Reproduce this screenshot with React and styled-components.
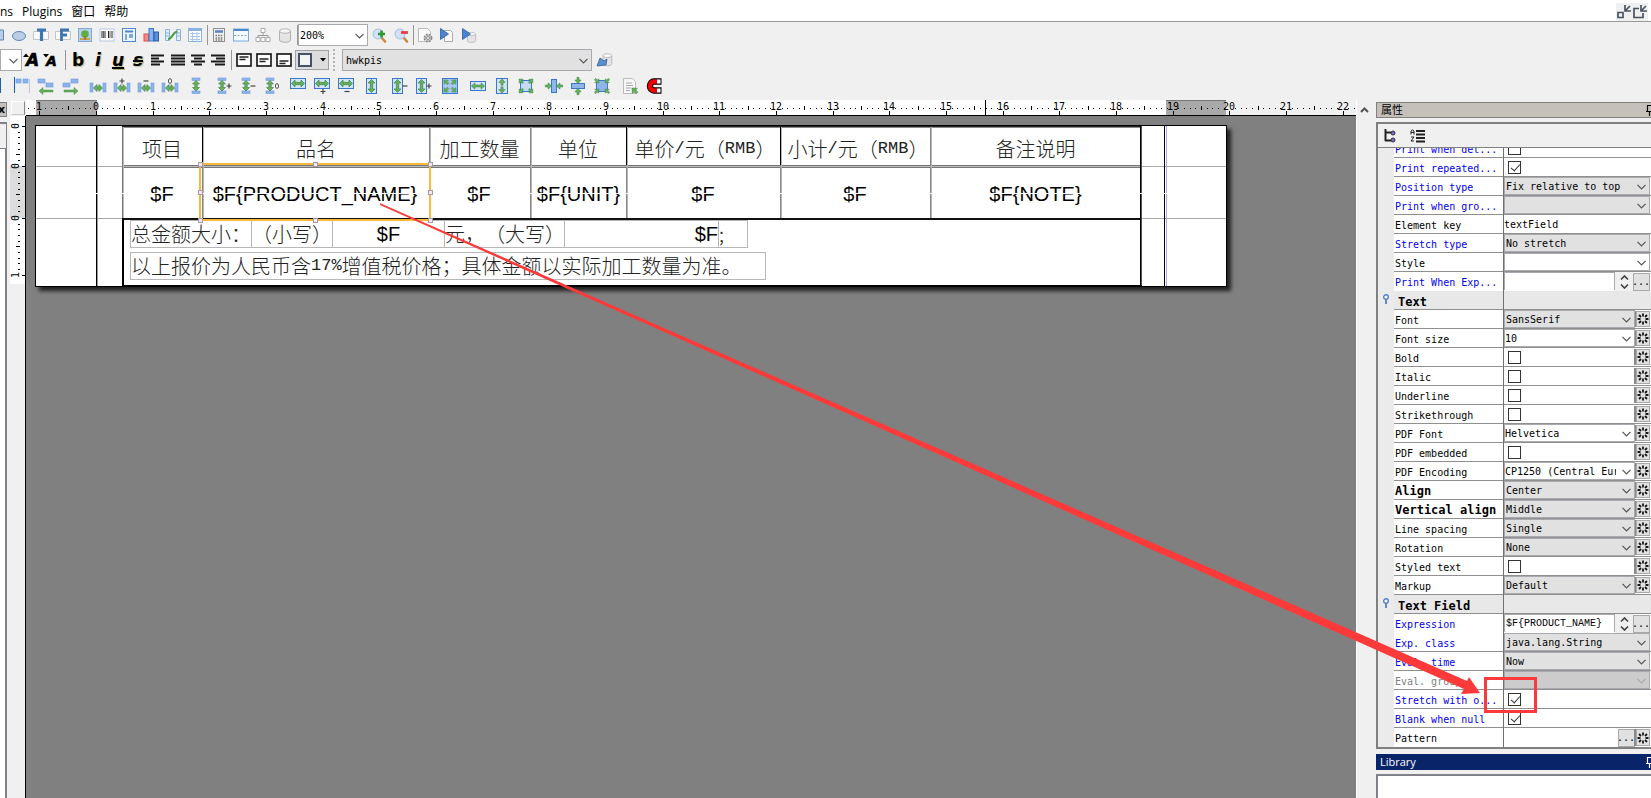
import React from "react";
import styled, { createGlobalStyle } from "styled-components";

const MONO = '"DejaVu Sans Mono", "Liberation Mono", monospace';
const UI = '"Open Sans", "Noto Sans CJK SC", sans-serif';
const CJK = '"Noto Sans CJK SC", sans-serif';
const RED = "#fd3a3a";

const GlobalStyle = createGlobalStyle`
  * { box-sizing: border-box; }
  body { margin: 0; background: #f0f0f0; font-family: ${UI}; font-size: 12px; color: #000; }
  button, input, select { font: inherit; color: inherit; margin: 0; padding: 0; border-radius: 0; }
`;

/* ---------- shell ---------- */
const Shell = styled.div`
  position: relative;
  display: flex;
  flex-direction: column;
  height: 100vh;
  overflow: hidden;
`;
const MenuBar = styled.nav`
  display: flex;
  align-items: center;
  flex: none;
  height: 22px;
  background: #fff;
  border-bottom: 1px solid #999;
  padding-right: 3px;
`;
const MenuItem = styled.button`
  border: 0;
  background: none;
  margin-right: 9px;
  padding-top: 2px;
  line-height: 20px;
`;
const WindowButtons = styled.div`
  display: flex;
  margin-left: auto;
  margin-top: 3px;
  background: #f0f0f0;
`;
const Toolbar = styled.div`
  display: flex;
  align-items: center;
  flex: none;
  height: ${(p) => p.$h}px;
`;
const Group = styled.div`
  display: flex;
  align-items: center;
  margin-right: ${(p) => p.$gap || 0}px;
`;
const Tool = styled.button`
  display: grid;
  place-items: center;
  width: ${(p) => p.$w}px;
  height: 18px;
  border: 0;
  background: none;
  svg { display: block; overflow: visible; }
`;
const Sep = styled.span`
  width: ${(p) => p.$w || 2}px;
  height: 20px;
  display: flex;
  justify-content: center;
  &::before { content: ""; width: 1px; background: #969696; }
`;
const Grip = styled.span`
  width: 2px;
  height: 22px;
  margin: 0 7px 0 4px;
  background: repeating-linear-gradient(#b4b4b4 0 2px, transparent 2px 4px);
`;
const ComboBox = styled.span`
  position: relative;
  display: block;
  flex: ${(p) => (p.$w ? "none" : "1")};
  width: ${(p) => (p.$w ? p.$w + "px" : "auto")};
  min-width: 0;
  height: ${(p) => p.$h}px;
  select {
    appearance: none;
    display: block;
    width: 100%;
    height: 100%;
    padding: 1px 18px 0 ${(p) => p.$pad}px;
    border: 1px solid #a9a9b0;
    background: ${(p) => p.$bg};
    font-family: ${MONO};
    font-size: 10px;
    opacity: 1;
    color: #000;
    overflow: hidden;
  }
  svg { position: absolute; right: 4px; top: 50%; margin-top: -2px; pointer-events: none; }
`;
const Combo = ({ w, h, bg = "#fff", value, id, label, pad = 1, disabled }) => (
  <ComboBox $w={w} $h={h} $bg={bg} $pad={pad}>
    <select id={id} aria-label={label} disabled={disabled}><option>{value}</option></select>
    <svg width="9" height="6" viewBox="0 0 9 6"><path d="M.5 .8 4.5 4.8 8.5 .8" fill="none" stroke={disabled ? "#aaa" : "#555"} strokeWidth="1.2" /></svg>
  </ComboBox>
);
const BorderPicker = styled.button`
  display: flex;
  align-items: center;
  justify-content: space-between;
  width: 34px;
  height: 20px;
  margin-left: 1px;
  padding: 0 2px;
  border: 1px solid #a0a0a0;
  background: #ddd;
`;

/* ---------- icons ---------- */
const G = "#66b15c";
const GD = "#2f7a35";
const B = "#8db4ea";
const BD = "#3a78cf";

const HArrow = ({ x1, x2, y }) => (
  <path d={`M${x1} ${y}l3.500-3.500v2.300H${x2 - 3.5}v-2.300l3.500 3.500-3.500 3.500v-2.300H${x1 + 3.5}v2.300z`} fill={G} stroke={GD} strokeWidth=".6" />
);
const VArrow = ({ y1, y2, x }) => (
  <path d={`M${x} ${y1}l3.500 3.500h-2.300V${y2 - 3.5}h2.300l-3.500 3.500-3.500-3.500h2.300V${y1 + 3.5}h-2.300z`} fill={G} stroke={GD} strokeWidth=".6" />
);
const One = ({ x, y, r = 0, s = 1 }) => (
  <path transform={`translate(${x} ${y}) rotate(${r}) scale(${s})`} d="M-3.5-1.2h3v-2.3L3.5 0-.5 3.5v-2.3h-3z" fill={G} stroke={GD} strokeWidth=".5" />
);
const Sign = ({ kind, x, y }) => (
  kind === "0"
    ? <ellipse cx={x} cy={y} rx="1.6" ry="2.4" fill="none" stroke="#555" />
    : <path d={kind === "+" ? `M${x - 2.5} ${y}h5M${x} ${y - 2.5}v5` : `M${x - 2.5} ${y}h5`} stroke="#444" fill="none" strokeWidth="1.2" />
);
const Box = ({ x, y, w, h, fill = "#d4e5fa", stroke = BD }) => (
  <rect x={x + 0.5} y={y + 0.5} width={w - 1} height={h - 1} fill={fill} stroke={stroke} />
);
const Blk = ({ x, y, w, h }) => <rect x={x} y={y} width={w} height={h} fill={B} stroke="#6c9ce0" strokeWidth=".6" />;

const hSpace = (k) => (<><Blk x={4} y={6} w={3} h={9} /><Blk x={17} y={6} w={3} h={9} /><HArrow x1={7.5} x2={16.5} y={11} />{k && <Sign kind={k} x={12} y={4} />}</>);
const vSpace = (k) => (<><Blk x={8} y={1} w={8} h={2.5} /><Blk x={8} y={14} w={8} h={2.5} /><VArrow y1={3.5} y2={14} x={12} />{k && <Sign kind={k} x={19} y={9} />}</>);
const wBox = (k) => (<><Box x={4} y={1} w={16} h={11} /><HArrow x1={5.5} x2={18.5} y={6.5} />{k && <Sign kind={k} x={13} y={14.5} />}</>);
const hBox = (k) => (<><Box x={6} y={1} w={11} h={16} /><VArrow y1={2.5} y2={15.5} x={11.5} />{k && <Sign kind={k} x={19} y={9} />}</>);
const corners = (out, fill) => (
  <>
    <Box x={6} y={3} w={12} h={12} fill={fill} />
    <One x={7} y={4} r={out ? 225 : 45} s={0.8} /><One x={17} y={4} r={out ? 315 : 135} s={0.8} />
    <One x={7} y={14} r={out ? 135 : 315} s={0.8} /><One x={17} y={14} r={out ? 45 : 225} s={0.8} />
  </>
);

const LAYOUT_GROUPS = [
  [4, [
    ["Align to top", <><path d="M4.500 0v16" stroke="#1d5fb4" /><Blk x={6} y={2} w={5} h={4} /><Blk x={13} y={2} w={5} h={4} /><path d="M19.500 2v14" stroke="#b9c9dd" /></>],
    ["Move to left", <><Blk x={4} y={2} w={7} h={4} /><Blk x={12} y={6} w={7} h={4} /><path d="M5 14l4-3.500v2.500h10v2H9v2.500z" fill={G} stroke={GD} strokeWidth=".4" /></>],
    ["Move to right", <><Blk x={13} y={2} w={7} h={4} /><Blk x={5} y={6} w={7} h={4} /><path d="M20 14l-4-3.500v2.500H6v2h10v2.500z" fill={G} stroke={GD} strokeWidth=".4" /></>],
  ]],
  [2, [["Equal horizontal space", hSpace()], ["Increase horizontal space", hSpace("+")], ["Decrease horizontal space", hSpace("-")], ["Remove horizontal space", hSpace("0")]]],
  [2, [["Equal vertical space", vSpace()]]],
  [4, [["Increase vertical space", vSpace("+")], ["Decrease vertical space", vSpace("-")], ["Remove vertical space", vSpace("0")]]],
  [2, [["Same width", wBox()], ["Same width, largest", wBox("+")], ["Same width, smallest", wBox("-")]]],
  [2, [["Same height", hBox()]]],
  [4, [["Same height, smallest", hBox("-")], ["Same height, largest", hBox("+")]]],
  [4, [["Same size", <><Box x={4} y={1} w={16} h={16} fill="#a9c9f2" /><One x={8} y={5} r={225} s={0.85} /><One x={16} y={5} r={315} s={0.85} /><One x={8} y={13} r={135} s={0.85} /><One x={16} y={13} r={45} s={0.85} /></>]]],
  [4, [
    ["Center horizontally", <><Box x={4} y={4} w={16} h={10} /><One x={8.5} y={9} r={180} s={0.9} /><One x={15.5} y={9} s={0.9} /></>],
    ["Center vertically", <><Box x={6} y={1} w={12} h={16} /><One x={12} y={5} r={270} s={0.9} /><One x={12} y={13} r={90} s={0.9} /></>],
    ["Center in band", corners(true, "#c5dbf7")],
  ]],
  [4, [
    ["Join sides left", <><Box x={9} y={2} w={6} h={14} fill="#8fb6ea" /><One x={6.500} y={9} s={0.9} /><One x={17.500} y={9} r={180} s={0.9} /></>],
    ["Join sides right", <><Box x={5} y={6} w={14} h={6} fill="#8fb6ea" /><One x={12} y={3.500} r={90} s={0.9} /><One x={12} y={14.500} r={270} s={0.9} /></>],
    ["Adapt to band", corners(false, "#8fb6ea")],
  ]],
  [0, [
    ["Organize", <><path d="M5.500 1.500h9l3 3v12h-12z" fill="#f7f7f7" stroke="#bbb" /><path d="M8 6h6M8 8.500h7M8 11h5M8 13.500h4" stroke="#aaa" /><One x={16.500} y={13.500} r={225} /></>],
    ["Snap to grid", <><path d="M19.500 4.500h-7.500a4 4.500 0 0 0 0 9h7.500" fill="none" stroke="#000" strokeWidth="6.400" /><path d="M15 4.500h-3a4 4.500 0 0 0 0 9H15" fill="none" stroke="#f00000" strokeWidth="4.400" /><path d="M15 4.500h3.500M15 13.500h3.500" stroke="#fff" strokeWidth="4.200" /></>],
  ]],
];

const steel = "#3f76b0";
const Play = () => <path d="M1.500 1.500v11l8-5.500z" fill="#4c84d0" stroke="#2b5ca0" strokeWidth=".8" />;
const Lens = ({ plus }) => (
  <>
    <path d="M10 10l4 4.500" stroke="#c98a3c" strokeWidth="2.600" strokeLinecap="round" />
    <circle cx="7" cy="7" r="5" fill="#cfe2f7" stroke="#a9bfdc" />
    {plus ? <path d="M10.500 3.500v7M7 7h7" stroke="#2f9a33" strokeWidth="2.600" /> : <path d="M8 5.500h7" stroke="#f04040" strokeWidth="2.800" />}
  </>
);
const Cylinder = () => (
  <>
    <path d="M2.500 4v9c0 3 11 3 11 0V4" fill="#e4e4e4" stroke="#b0b0b0" />
    <ellipse cx="8" cy="4" rx="5.500" ry="2.200" fill="#f7f7f7" stroke="#b5b5b5" />
  </>
);
const Letter = ({ c }) => (
  <>
    <path d="M.5 4.500h15v8H.5z" fill="#fafafa" stroke="#c4c4c4" />
    {c === "T" ? <path d="M4 3h9M8.500 3v11" stroke={steel} strokeWidth="3.200" /> : <path d="M6.500 14V2M5 3h9M6 8h6" stroke={steel} strokeWidth="2.800" fill="none" />}
  </>
);

const PALETTE = [
  ["Ellipse", <ellipse cx="8" cy="9" rx="6.500" ry="4.500" fill="#b9cde6" stroke="#5e87b5" />],
  ["Static text", <Letter c="T" />],
  ["Text field", <Letter c="F" />],
  ["Image", <><rect x="1.500" y="1.500" width="13" height="13" fill="#b4d2f5" stroke="#8aa8cc" /><path d="M3 11h10v2H3z" fill="#c9a050" /><circle cx="8" cy="7" r="3.800" fill="#5fae3f" /><path d="M8 9v4" stroke="#80602c" /></>],
  ["Barcode", <><rect x="1" y="2" width="14" height="12" fill="#fff" stroke="#b9c9e0" /><path d="M3 4v7M6 4v7M9.500 4v7M13 4v7" stroke="#222" /><path d="M4.500 4v7M11 4v7" stroke="#222" strokeWidth=".7" /></>],
  ["Subreport", <><rect x="1.500" y="1.500" width="13" height="13" fill="#eef5ff" stroke="#4c87cf" /><path d="M4 4.500h8" stroke="#4c87cf" strokeWidth="2" /><path d="M4 7h2v6H4zM8 7h4v4H8z" fill="#7facdf" /></>],
  ["Chart", <><rect x="1" y="7" width="4.500" height="7" fill="#f28a8a" stroke="#dd4b4b" /><rect x="6" y="1.500" width="4.500" height="12.500" fill="#86b4ee" stroke="#3d7ac8" /><rect x="11" y="5" width="4.500" height="9" fill="#5c8ed8" stroke="#2a5ea8" /></>],
  ["Crosstab", <><path d="M.5 2.500h4v11h-4zM11.500 2.500h4v11h-4z" fill="#e2eefb" stroke="#8fb2dc" /><path d="M1 6h3M1 9h3M12 6h3M12 9h3" stroke="#8fb2dc" /><path d="M3 12C8 12 7 5 12.500 4.500" stroke="#4ea04a" strokeWidth="2.200" fill="none" /></>],
  ["Table", <><rect x="1.500" y="1.500" width="13" height="13" fill="#fff" stroke="#88b2e4" /><path d="M2 3h12" stroke="#88b2e4" strokeWidth="2" /><path d="M3 6.500h10M3 9.500h10M3 12.500h10M5.500 5v9M10 5v9" stroke="#a8c6ea" /></>],
];
const PALETTE_2 = [
  ["Calculator", <><rect x="2.500" y="1.500" width="11" height="13" fill="#f2f2f2" stroke="#909090" /><path d="M4 4.500h8" stroke="#5b86c4" strokeWidth="2.600" /><path d="M4.500 8.500h7M4.500 11h7M4.500 13h7" stroke="#777" strokeWidth="1.400" strokeDasharray="1.600 1" /></>],
  ["Page break", <><rect x=".5" y="2" width="15" height="12" fill="#f4f9ff" stroke="#7ba7dc" /><path d="M1 3h14" stroke="#4d87d0" strokeWidth="2" /><path d="M1 8.500h14" stroke="#8aa" strokeDasharray="2 1.500" /></>],
  ["Hierarchy", <><path d="M8 5v4M3 11V8.500h10V11" fill="none" stroke="#999" /><path d="M6 1.500h4v4H6zM1 10.500h4v4H1zM6 10.500h4v4H6zM11 10.500h4v4h-4z" fill="#fff" stroke="#aaa" /></>],
  ["Dataset", <Cylinder />],
];
const RUN = [
  ["Report settings", <><path d="M1.500 1.500h9l3 3v10h-12z" fill="#fafafa" stroke="#bbb" /><circle cx="11" cy="11" r="3.500" fill="#ddd" stroke="#888" strokeWidth="1.800" strokeDasharray="1.800 1" /><circle cx="11" cy="11" r="1.500" fill="#fff" stroke="#888" /></>],
  ["Run report", <><path d="M5.500 3.500h6l2 2v9h-8z" fill="#fafafa" stroke="#aaa" /><Play /></>],
  ["Run with data", <><g transform="translate(4.500 4) scale(.75)"><Cylinder /></g><Play /></>],
];

const para = (a) => (
  <path
    d={{ l: "M1 2.500h13M1 5.500h8M1 8.500h13M1 11.500h9", j: "M1 2.500h14M1 5.500h14M1 8.500h14M1 11.500h14", c: "M1 2.500h14M4 5.500h8M1 8.500h14M4 11.500h8", r: "M1 2.500h14M6 5.500h9M1 8.500h14M5 11.500h10" }[a]}
    stroke="#1a1a1a" strokeWidth="2" transform="translate(0 1)"
  />
);
const valign = (y) => (
  <><rect x="1" y="2" width="14" height="12" fill="#fff" stroke="#111" strokeWidth="1.600" /><path d={`M3.500 ${y}h9M3.500 ${y + 2.500}h6`} stroke="#222" strokeWidth="1.500" /></>
);

const Glyph = styled.span`
  font: ${(p) => (p.$italic ? "italic " : "")}bold ${(p) => p.$size}px/18px "DejaVu Sans", sans-serif;
  text-decoration: ${(p) => p.$deco || "none"};
  text-decoration-thickness: 2px;
  text-shadow: 1px 1px 1px #b5b58a;
`;
const SizeTool = ({ name, size, mark }) => (
  <Tool type="button" aria-label={name} $w={20}>
    <svg width="18" height="16" viewBox="0 0 18 16">
      <path d={mark} />
      <text x="3" y="14" fontFamily="DejaVu Sans, sans-serif" fontWeight="700" fontStyle="italic" fontSize={size} stroke="#000" strokeWidth=".6">A</text>
    </svg>
  </Tool>
);

const Icon16 = ({ children }) => <svg width="16" height="16" viewBox="0 0 16 16">{children}</svg>;
const Tools = ({ items, w }) => items.map(([name, art]) => (
  <Tool key={name} type="button" aria-label={name} $w={w}><Icon16>{art}</Icon16></Tool>
));

/* ---------- work area ---------- */
const Work = styled.div`
  display: flex;
  flex: 1;
  min-height: 0;
`;
const LeftStrip = styled.aside`
  display: flex;
  flex-direction: column;
  width: 10px;
  padding: 2px 3px 0 0;
`;
const CloseTab = styled.button`
  height: 15px;
  border: 1px solid #808080;
  border-left: 0;
  background: #c5c1ba;
  overflow: hidden;
  font: bold 11px/10px "DejaVu Sans", sans-serif;
  text-indent: -3px;
`;
const StripHead = styled.div`
  height: 26px;
  margin-top: 5px;
  border-top: 2px solid #808088;
  border-right: 1px solid #808088;
`;
const StripBody = styled.div`
  flex: 1;
  background: #fff;
  border-top: 1px solid #808088;
  border-right: 2px solid #808088;
`;
const Designer = styled.main`
  display: grid;
  grid-template-columns: 16px 1fr;
  grid-template-rows: 16px 1fr;
  flex: 1;
  min-width: 0;
`;
const Corner = styled.div`
  margin: 1px;
  border: 1px solid #ccc;
  border-left-color: #fff;
  border-top-color: #fff;
  border-right-color: #888;
  background: #f0f0f0;
`;
const RulerTop = styled.div`
  border-bottom: 1px solid #000;
  overflow: hidden;
  svg { display: block; }
`;
const RulerSide = styled.div`
  border-right: 1px solid #000;
  overflow: hidden;
  svg { display: block; }
`;
const Canvas = styled.div`
  position: relative;
  background: #808080;
  overflow: hidden;
`;
const Sheet = styled.div`
  position: absolute;
  left: 9px;
  top: 9px;
  width: 1192px;
  height: 162px;
  background: #fff;
  border: 1px solid #000;
  box-shadow: 4px 4px 4px rgba(0, 0, 0, 0.75);
`;
const Rule = styled.div`
  position: absolute;
  left: ${(p) => p.$x - 36}px;
  top: ${(p) => p.$y - 126}px;
  width: ${(p) => p.$w}px;
  height: ${(p) => p.$h}px;
  background: ${(p) => p.$c || "#000"};
`;
const Field = styled.div`
  position: absolute;
  left: ${(p) => p.$x - 36}px;
  top: ${(p) => p.$y - 126}px;
  width: ${(p) => p.$w}px;
  height: ${(p) => p.$h}px;
  display: flex;
  align-items: center;
  justify-content: ${(p) => p.$align || "center"};
  border: ${(p) => (p.$boxed ? "1px solid #b8b8b8" : "0")};
  color: ${(p) => (p.$expr ? "#000" : "#222")};
  font-family: ${(p) => (p.$expr ? '"Liberation Sans", sans-serif' : CJK)};
  font-weight: ${(p) => (p.$expr ? 400 : 300)};
  font-size: 20px;
  line-height: 24px;
  text-spacing-trim: space-all;
  white-space: nowrap;
`;
const Half = styled.span`
  font-family: "Liberation Mono", monospace;
  font-size: 17px;
`;
const Selection = styled.div`
  position: absolute;
  left: 163px;
  top: 37px;
  width: 232px;
  height: 58px;
  border: 2px solid #fbb93c;
`;
const Handle = styled.i`
  position: absolute;
  left: ${(p) => p.$x}px;
  top: ${(p) => p.$y}px;
  width: 5px;
  height: 5px;
  background: #f4e8ee;
  border: 1px solid #a898a8;
`;
const ScrollStrip = styled.div`
  width: 20px;
  border-left: 1px solid #fff;
  padding: 7px 0 0 3px;
  svg { display: block; }
`;

const CM = 170 / 3;
const range = (a, b) => Array.from({ length: b - a + 1 }, (_, i) => a + i);

const TopRuler = () => (
  <svg width="100%" height="15" shapeRendering="crispEdges">
    <rect width="1200" height="15" fill="#fff" />
    <rect x="10" y="0" width="61" height="15" fill="#a9a9a9" />
    <rect x="1140" y="0" width="60" height="15" fill="#a9a9a9" />
    <path d="M10 .5h61M1140 .5h60" stroke="#777" />
    {range(-12, 320).filter((t) => t % 10).map((t) => {
      const x = Math.round(70 + (t * CM) / 10);
      return <rect key={t} x={x} y={t % 5 ? 8 : 6} width="1" height={t % 5 ? 1 : 4} />;
    })}
    {range(-1, 22).map((n) => {
      const x = Math.round(70 + n * CM);
      return (
        <g key={n}>
          <rect x={x} y="11" width="1" height="4" />
          <text x={x} y="10" textAnchor="middle" fontFamily={MONO} fontSize="10">{Math.abs(n)}</text>
        </g>
      );
    })}
    <rect x="959" y="0" width="1" height="15" />
  </svg>
);

const BANDS = [[10, 40], [50, 52], [102, 66]];
const SideRuler = () => (
  <svg width="15" height="168" shapeRendering="crispEdges">
    <rect width="15" height="168" fill="#fff" />
    <rect y="50" width="15" height="52" fill="#dcdcdc" />
    {BANDS.map(([y, h]) => range(0, 11).filter((t) => t * CM / 10 < h - 4).map((t) => {
      const cy = Math.round(y + (t * CM) / 10);
      if (t % 10) return <rect key={y + "-" + t} x={t % 5 ? 8 : 6} y={cy} width={t % 5 ? 2 : 4} height="1" />;
      return (
        <g key={y + "-" + t}>
          <rect x="12" y={cy} width="3" height="1" />
          <text transform={`translate(9 ${cy}) rotate(-90)`} textAnchor="middle" fontFamily={MONO} fontSize="10">{t / 10}</text>
        </g>
      );
    }))}
  </svg>
);

/* x, y, width, height, colour of the report's ruled lines */
const COLS = [202, 429, 530, 626, 780, 930];
const RULES = [
  [36, 166, 1190, 1, "#a8a8a8"], [36, 218, 1190, 1, "#a8a8a8"],
  [96, 126, 1, 160], [97, 126, 1, 160, "#999"], [1164, 126, 1, 160], [1166, 126, 1, 160, "#aaaaf0"],
  [122, 126, 1019, 1, "#222"], [122, 127, 1019, 1, "#888"], [122, 165, 1019, 1, "#777"], [123, 167, 1018, 1, "#777"], [123, 166, 1018, 1, "#bbb"],
  [122, 127, 1, 91, "#777"], [123, 127, 1, 91, "#bbb"],
  ...COLS.map((x) => [x, 127, 1, 38, [202, 626, 780].includes(x) ? "#000" : "#888"]),
  ...COLS.map((x) => [x + 1, 127, 1, 91, "#b4b4b4"]),
  ...COLS.map((x) => [x, 167, 1, 51, "#888"]),
  [122, 218, 1020, 2, "#111"], [122, 218, 2, 68], [1140, 126, 1, 160], [1141, 126, 1, 160, "#555"], [122, 285, 1020, 1],
];
const HEADERS = [["项目", 122, 80], ["品名", 203, 226], ["加工数量", 429, 101], ["单位", 530, 96], ["单价|/|元（|RMB|）", 626, 158], ["小计|/|元（|RMB|）", 780, 156], ["备注说明", 930, 211]];
const DETAILS = [["$F", 122, 80], ["$F{PRODUCT_NAME}", 203, 224], ["$F", 429, 100], ["$F{UNIT}", 530, 97], ["$F", 626, 154], ["$F", 780, 150], ["$F{NOTE}", 930, 211]];
const FOOTER = [
  ["总金额大小：", 130, 122, "flex-start"], ["（小写）", 251, 82, "center"], ["$F", 332, 113, "center", true],
  ["元，（大写）", 444, 121, "flex-start"], ["$F", 564, 155, "flex-end", true], [";", 718, 30, "flex-start"],
];
const mixed = (s) => s.split("|").map((part, i) => (i % 2 ? <Half key={i}>{part}</Half> : part));

const Report = () => (
  <Sheet>
    {RULES.map(([x, y, w, h, c], i) => <Rule key={i} $x={x} $y={y} $w={w} $h={h} $c={c} />)}
    {HEADERS.map(([t, x, w]) => <Field key={x} $x={x} $y={130} $w={w} $h={38}>{mixed(t)}</Field>)}
    {DETAILS.map(([t, x, w]) => <Field key={x} $x={x} $y={168} $w={w} $h={52} $expr>{t}</Field>)}
    {FOOTER.map(([t, x, w, a, e]) => <Field key={x} $x={x} $y={220} $w={w} $h={28} $align={a} $expr={e} $boxed>{t}</Field>)}
    <Field $x={130} $y={252} $w={636} $h={28} $align="flex-start" $boxed>{mixed("以上报价为人民币含|17%|增值税价格；具体金额以实际加工数量为准。")}</Field>
    <Rule $x={96} $y={193} $w={1071} $h={1} $c="#fff" />
    <Selection>
      {[-3, 112, 227].map((x) => [-3, 25, 53].filter((y) => !(x === 112 && y === 25)).map((y) => <Handle key={x + "," + y} $x={x} $y={y} />))}
    </Selection>
  </Sheet>
);

/* ---------- side panels ---------- */
const Side = styled.aside`
  display: flex;
  flex-direction: column;
  width: 275px;
  padding-top: 2px;
`;
const PanelTitle = styled.header`
  display: flex;
  align-items: center;
  justify-content: space-between;
  height: 16px;
  padding-left: 4px;
  border: ${(p) => (p.$active ? "0" : "1px solid #808080")};
  border-right: 0;
  background: ${(p) => (p.$active ? "#0a246a" : "#c5c1ba")};
  color: ${(p) => (p.$active ? "#fff" : "#000")};
  font-size: 11px;
  line-height: 14px;
`;
const PropPanel = styled.section`
  display: flex;
  flex-direction: column;
  height: 627px;
  margin: 4px 0 5px;
  border: 2px solid #808080;
  border-right: 0;
  background: #e8e8e8;
  overflow: hidden;
`;
const PropTools = styled.div`
  display: flex;
  gap: 10px;
  flex: none;
  height: 24px;
  padding: 3px 0 0 3px;
  background: #f0f0f0;
  border-bottom: 1px solid #808080;
`;
const PropList = styled.div`
  min-height: 0;
  flex: 1;
  overflow: hidden;
`;
const PropRows = styled.div`
  margin-top: -9px;
`;
const Row = styled.div`
  display: grid;
  grid-template-columns: 16px 109px 1px 1fr;
  height: 19px;
`;
const Gutter = styled.span`
  background: #ebebeb;
  svg { display: block; margin: 3px 0 0 4px; }
`;
const Name = styled.label`
  padding: ${(p) => (p.$group ? "5px 0 0 4px" : "3px 0 0 1px")};
  border-bottom: 1px solid #909090;
  background: ${(p) => (p.$group ? "#e8e8e8" : "#fff")};
  color: ${(p) => p.$color};
  font-family: ${MONO};
  font-weight: ${(p) => (p.$bold ? 700 : 400)};
  font-size: ${(p) => (p.$bold ? 12 : 10)}px;
  line-height: ${(p) => (p.$group ? 13 : 15)}px;
  white-space: nowrap;
  overflow: hidden;
`;
const ColLine = styled.span`
  background: #707070;
`;
const Value = styled.div`
  display: flex;
  align-items: stretch;
  min-width: 0;
  padding-right: 1px;
  border-bottom: 1px solid #909090;
  background: ${(p) => (p.$group ? "#e8e8e8" : "#fff")};
  font-family: ${MONO};
  font-size: 10px;
`;
const Check = styled.input`
  appearance: none;
  position: relative;
  width: 13px;
  height: 13px;
  margin: 3px auto 0 4px;
  border: 1px solid #333;
  background: #fff;
  &:checked::after {
    content: "";
    position: absolute;
    left: 4px;
    top: 0;
    width: 4px;
    height: 8px;
    border: solid #333;
    border-width: 0 1px 1px 0;
    transform: rotate(42deg);
  }
`;
const TextBox = styled.input`
  flex: 1;
  min-width: 0;
  height: 18px;
  padding-left: ${(p) => (p.$framed ? 1 : 0)}px;
  border: 0 solid #a9a9b0;
  border-width: ${(p) => (p.$framed ? "1px 1px 0" : "0")};
  background: #fff;
  font-family: ${(p) => (p.$framed ? '"Liberation Mono", monospace' : MONO)};
  line-height: 16px;
`;
const Spin = styled.span`
  display: grid;
  place-items: center;
  width: 18px;
  background: #f0f0f0;
`;
const Dots = styled.button`
  width: 17px;
  margin: 1px 0 0;
  border: 1px solid #a9a9a9;
  background: #e1e1e1;
  line-height: 16px;
  overflow: hidden;
  text-indent: -2px;
`;
const Gear = styled.button`
  display: grid;
  place-items: center;
  width: 14px;
  margin: 1px 0 1px 1px;
  border: 1px solid #a9a9a9;
  background: #e1e1e1;
  box-shadow: -2px 0 0 #8a8a8a;
`;
const LibraryBody = styled.section`
  flex: 1;
  margin-top: 4px;
  border: 2px solid #808088;
  border-right: 0;
  border-bottom: 0;
  background: #fff;
`;
const Overlay = styled.svg`
  position: absolute;
  left: 0;
  top: 0;
  width: 100%;
  height: 100%;
  pointer-events: none;
`;

const GearBtn = ({ name }) => (
  <Gear type="button" aria-label={name + " default"}>
    <svg width="12" height="14" viewBox="0 0 12 14"><path d="M6 1.500v3M6 9.500v3M.5 7h3M8.500 7h3M2 3l2 2M10 3 8 5M2 11l2-2M10 11 8 9" stroke="#1a1a1a" strokeWidth="1.800" /></svg>
  </Gear>
);
const Pin = ({ color }) => (
  <svg width="5" height="12" viewBox="0 0 5 12"><path d="M5 1.500H1.500V7M0 7.500h5M3.500 8v4" fill="none" stroke={color} strokeWidth="1.200" /></svg>
);

/* name, kind, value, flags: b blue, x grey, B bold, g has a default button */
const PROPS = [
  ["Print when det...", "check", false, "b"], ["Print repeated...", "check", true, "b"],
  ["Position type", "combo", "Fix relative to top", "b"], ["Print when gro...", "combo", "", "b"],
  ["Element key", "text", "textField", ""], ["Stretch type", "combo", "No stretch", "b"],
  ["Style", "edit", "", ""], ["Print When Exp...", "expr", "", "b"],
  ["Text", "group"],
  ["Font", "combo", "SansSerif", "g"], ["Font size", "edit", "10", "g"],
  ["Bold", "check", false, "g"], ["Italic", "check", false, "g"], ["Underline", "check", false, "g"], ["Strikethrough", "check", false, "g"],
  ["PDF Font", "edit", "Helvetica", "g"], ["PDF embedded", "check", false, "g"], ["PDF Encoding", "edit", "CP1250 (Central European)", "g"],
  ["Align", "combo", "Center", "gB"], ["Vertical align", "combo", "Middle", "gB"], ["Line spacing", "combo", "Single", "g"],
  ["Rotation", "combo", "None", "g"], ["Styled text", "check", false, "g"], ["Markup", "combo", "Default", "g"],
  ["Text Field", "group"],
  ["Expression", "expr", "$F{PRODUCT_NAME}", "b"], ["Exp. class", "combo", "java.lang.String", "b"], ["Eval. time", "combo", "Now", "b"],
  ["Eval. group", "off", "", "x"], ["Stretch with o...", "check", true, "b"], ["Blank when null", "check", true, "b"],
  ["Pattern", "pattern", "", "g"],
];

const Property = ({ name, kind, value, flags = "" }) => {
  const id = "p-" + name.replace(/\W+/g, "-").toLowerCase();
  const group = kind === "group";
  const color = flags.includes("b") ? "#0000f0" : flags.includes("x") ? "#808080" : "#000";
  return (
    <Row>
      <Gutter>{group && <svg width="8" height="11" viewBox="0 0 8 11"><circle cx="4" cy="3" r="2.300" fill="#fff" stroke="#5580c8" strokeWidth="1.400" /><path d="M4 5v5" stroke="#5580c8" strokeWidth="1.800" /></svg>}</Gutter>
      <Name as={group ? "span" : "label"} htmlFor={group ? undefined : id} $group={group} $bold={group || flags.includes("B")} $color={color}>{name}</Name>
      <ColLine />
      <Value $group={group}>
        {kind === "check" && <Check type="checkbox" id={id} defaultChecked={value} />}
        {kind === "combo" && <Combo id={id} h={18} bg="#e1e1e1" value={value} />}
        {kind === "edit" && <Combo id={id} h={18} value={value} pad={0} />}
        {kind === "off" && <Combo id={id} h={18} bg="#ccc" value={value} disabled />}
        {kind === "text" && <TextBox id={id} defaultValue={value} />}
        {kind === "expr" && (
          <>
            <TextBox id={id} defaultValue={value} $framed />
            <Spin><svg width="9" height="14" viewBox="0 0 9 14"><path d="M1 4.500 4.500 1 8 4.500M1 9.500 4.500 13 8 9.500" fill="none" stroke="#444" strokeWidth="1.700" /></svg></Spin>
            <Dots type="button" aria-label={name + " editor"}>...</Dots>
          </>
        )}
        {kind === "pattern" && (
          <>
            <TextBox id={id} defaultValue={value} />
            <Dots type="button" aria-label="Pattern editor">...</Dots>
          </>
        )}
        {flags.includes("g") && <GearBtn name={name} />}
      </Value>
    </Row>
  );
};

export default function App() {
  return (
    <Shell>
      <GlobalStyle />
      <MenuBar>
        <MenuItem type="button">ns</MenuItem>
        <MenuItem type="button">Plugins</MenuItem>
        <MenuItem type="button">窗口</MenuItem>
        <MenuItem type="button">帮助</MenuItem>
        <WindowButtons>
          <Tool type="button" aria-label="Restore" $w={16}><Icon16><path d="M2 8.500h5v5H2zM9 1v6h6M9.500 6.500 14 2" fill="none" stroke="#4a5560" strokeWidth="1.700" /></Icon16></Tool>
          <Tool type="button" aria-label="Maximize" $w={16}><Icon16><path d="M7 4.500H2v9h9V9M9 1v6h6M9.500 6.500 14 2" fill="none" stroke="#4a5560" strokeWidth="1.700" /></Icon16></Tool>
        </WindowButtons>
      </MenuBar>

      <Toolbar $h={26}>
        <Tool type="button" aria-label="Rectangle" $w={8}><svg width="8" height="16" viewBox="0 0 8 16"><path d="M-1 3h4.500v10H-1z" fill="#b9cde6" stroke="#5e87b5" /></svg></Tool>
        <Tools items={PALETTE} w={22} />
        <Sep />
        <Tools items={PALETTE_2} w={22} />
        <Sep />
        <Combo label="Zoom" w={70} h={22} value="200%" />
        <Tool type="button" aria-label="Zoom in" $w={22}><Icon16><Lens plus /></Icon16></Tool>
        <Tool type="button" aria-label="Zoom out" $w={22}><Icon16><Lens /></Icon16></Tool>
        <Sep />
        <Tools items={RUN} w={22} />
      </Toolbar>

      <Toolbar $h={24}>
        <Combo label="Size" w={22} h={22} value="" />
        <SizeTool name="Increase font" size={17} mark="M0 5l3-3.500L6 5z" />
        <SizeTool name="Decrease font" size={14} mark="M0 2h6L3 5.500z" />
        <Sep $w={6} />
        <Tool type="button" $w={20}><Glyph $size={17}>b</Glyph></Tool>
        <Tool type="button" $w={20}><Glyph $size={17} $italic>i</Glyph></Tool>
        <Tool type="button" $w={20}><Glyph $size={17} $italic $deco="underline">u</Glyph></Tool>
        <Tool type="button" $w={20}><Glyph $size={17} $italic $deco="line-through">s</Glyph></Tool>
        <Tools w={20} items={[["Align left", para("l")], ["Justify", para("j")], ["Align center", para("c")], ["Align right", para("r")]]} />
        <Sep $w={6} />
        <Tools w={20} items={[["Top", valign(5)], ["Middle", valign(7)], ["Bottom", valign(9)]]} />
        <BorderPicker type="button" aria-label="Borders">
          <svg width="14" height="14" viewBox="0 0 14 14"><rect x="1" y="1" width="12" height="12" fill="#f4f4f4" stroke="#4a5068" strokeWidth="2" /></svg>
          <svg width="6" height="4" viewBox="0 0 6 4"><path d="M0 0h6L3 3.500z" /></svg>
        </BorderPicker>
        <Grip />
        <Combo label="Data source" w={250} h={22} bg="#e1e1e1" value="hwkpis" pad={3} />
        <Tool type="button" aria-label="Connect" $w={26}><Icon16><g transform="translate(4 0) scale(.8 .9)"><Cylinder /></g><path d="M0 14l3-8 4 3 3-2-1 6z" fill="#5b8fd0" stroke="#2f5f9e" strokeWidth=".8" /></Icon16></Tool>
      </Toolbar>

      <Toolbar $h={28}>
        <Tool type="button" aria-label="Align to left" $w={10}><svg width="10" height="18" viewBox="0 0 10 18"><path d="M.5 1v15" stroke="#1d5fb4" /></svg></Tool>
        {LAYOUT_GROUPS.map(([gap, items], i) => (
          <Group key={i} $gap={gap}>
            {items.map(([name, art]) => (
              <Tool key={name} type="button" aria-label={name} $w={24}><svg width="24" height="18" viewBox="0 0 24 18">{art}</svg></Tool>
            ))}
          </Group>
        ))}
      </Toolbar>

      <Work>
        <LeftStrip>
          <CloseTab type="button">x</CloseTab>
          <StripHead />
          <StripBody />
        </LeftStrip>
        <Designer>
          <Corner />
          <RulerTop><TopRuler /></RulerTop>
          <RulerSide><SideRuler /></RulerSide>
          <Canvas><Report /></Canvas>
        </Designer>
        <ScrollStrip><svg width="9" height="6" viewBox="0 0 9 6"><path d="M1 5 4.500 1.500 8 5" fill="none" stroke="#555" strokeWidth="2" /></svg></ScrollStrip>
        <Side>
          <PanelTitle>属性<Pin color="#000" /></PanelTitle>
          <PropPanel>
            <PropTools>
              <Tool type="button" aria-label="Categories" $w={18}><Icon16><path d="M3.500 1v12M3 4.500h6M3 12.500h6" fill="none" stroke="#222" strokeWidth="2" /><circle cx="11" cy="5" r="2" fill="#7a70c8" stroke="#222" strokeWidth=".9" /><circle cx="11" cy="12" r="2" fill="#7a70c8" stroke="#222" strokeWidth=".9" /></Icon16></Tool>
              <Tool type="button" aria-label="Sort by name" $w={18}><Icon16><path d="M6 3h9M6 6.500h9M6 10h9M6 13.500h9" stroke="#222" strokeWidth="2" /><path d="M1 6.500V3l1.500-1L4 3v3.500M1 4.500h3M1 9h3l-3 4h3" fill="none" stroke="#222" /></Icon16></Tool>
            </PropTools>
            <PropList>
              <PropRows>
                {PROPS.map(([name, kind, value, flags]) => <Property key={name} name={name} kind={kind} value={value} flags={flags} />)}
              </PropRows>
            </PropList>
          </PropPanel>
          <PanelTitle $active>Library<Pin color="#fff" /></PanelTitle>
          <LibraryBody />
        </Side>
      </Work>

      <Overlay>
        <polygon points="380,203 382,204 1467,681 1469,677 1480,693 1461,694 1464,689 380,205" fill={RED} />
        <rect x="1485.500" y="678.500" width="50" height="33" fill="none" stroke={RED} strokeWidth="3" />
      </Overlay>
    </Shell>
  );
}
